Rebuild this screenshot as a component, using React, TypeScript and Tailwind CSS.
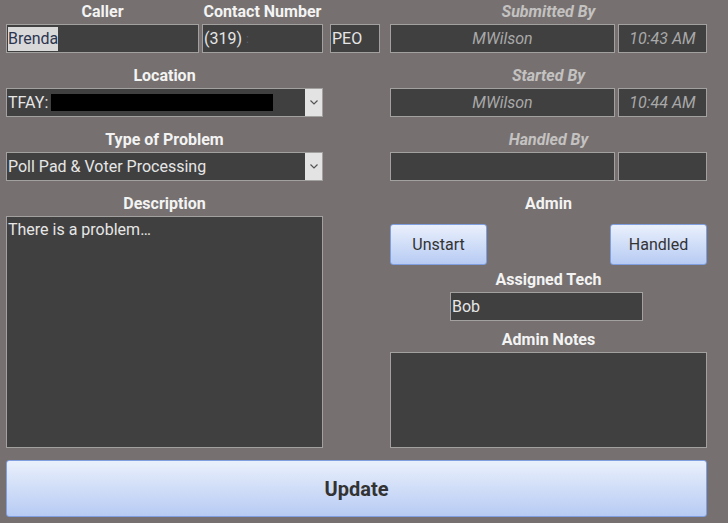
import React from 'react';

const Label: React.FC<{ text: string; muted?: boolean; className?: string }> = ({ text, muted, className }) => (
  <div
    className={`h-6 flex items-center justify-center text-base font-bold ${
      muted ? 'italic text-[#c4c2c1]' : 'text-[#f3f3f3]'
    } ${className ?? ''}`}
  >
    {text}
  </div>
);

const Box: React.FC<{ className?: string; muted?: boolean; children?: React.ReactNode }> = ({ className, muted, children }) => (
  <div
    className={`h-[29px] bg-[#404040] border border-[#a3a19f] flex items-center px-[1px] text-base overflow-hidden whitespace-nowrap ${
      muted ? 'italic justify-center text-[#a9a9a9]' : 'text-[#e6e6e6]'
    } ${className ?? ''}`}
  >
    {children}
  </div>
);

const Select: React.FC<{ children: React.ReactNode }> = ({ children }) => (
  <div className="h-[29px] w-[317px] bg-[#404040] border border-[#a3a19f] flex items-stretch text-base text-[#e6e6e6]">
    <div className="flex-1 flex items-center px-[1px] overflow-hidden whitespace-nowrap">{children}</div>
    <div className="w-[17px] bg-[#e3e3e3] flex items-center justify-center">
      <svg width="8" height="5" viewBox="0 0 8 5">
        <path d="M0.5 0.5 L4 4 L7.5 0.5" fill="none" stroke="#555" strokeWidth="1.2" />
      </svg>
    </div>
  </div>
);

const TimeRow: React.FC<{ name?: string; time?: string }> = ({ name, time }) => (
  <div className="flex gap-[3px]">
    <Box muted className="w-[225px]">{name}</Box>
    <Box muted className="w-[89px]">{time}</Box>
  </div>
);

const Btn: React.FC<{ text: string; className?: string }> = ({ text, className }) => (
  <button
    className={`rounded-[3px] border border-[#7f9fe0] bg-gradient-to-b from-[#eaf0fc] to-[#b7cbf3] text-[#333] ${className ?? ''}`}
  >
    {text}
  </button>
);

export default function App() {
  return (
    <div className="w-[728px] h-[523px] bg-[#767170] font-['Roboto',sans-serif] px-[6px] overflow-hidden">
      <div className="grid grid-cols-[384px_317px]">
        {/* left column */}
        <div className="flex flex-col">
          <div className="flex">
            <div className="flex flex-col w-[193px]">
              <Label text="Caller" />
              <Box className="w-[193px]">
                <span className="bg-[#d9d9d9] text-[#2b3550]">Brenda</span>
              </Box>
            </div>
            <div className="flex flex-col w-[121px] ml-[3px]">
              <Label text="Contact Number" className="whitespace-nowrap" />
              <Box className="w-[121px]">
                (319)<span className="text-[#55607a] ml-1 text-xs">:</span>
              </Box>
            </div>
            <div className="flex flex-col w-[50px] ml-[7px]">
              <div className="h-6" />
              <Box className="w-[50px]">PEO</Box>
            </div>
          </div>

          <Label text="Location" className="mt-[11px] w-[317px]" />
          <Select>
            TFAY:
            <span className="ml-[3px] inline-block w-[222px] h-[17px] bg-black" />
          </Select>

          <Label text="Type of Problem" className="mt-[11px] w-[317px]" />
          <Select>Poll Pad &amp; Voter Processing</Select>

          <Label text="Description" className="mt-[11px] w-[317px]" />
          <div className="w-[317px] h-[232px] bg-[#404040] border border-[#a3a19f] px-[1px] text-base leading-[26px] text-[#e6e6e6]">
            There is a problem…
          </div>
        </div>

        {/* right column */}
        <div className="flex flex-col">
          <Label text="Submitted By" muted />
          <TimeRow name="MWilson" time="10:43 AM" />

          <Label text="Started By" muted className="mt-[11px]" />
          <TimeRow name="MWilson" time="10:44 AM" />

          <Label text="Handled By" muted className="mt-[11px]" />
          <TimeRow />

          <Label text="Admin" className="mt-[11px]" />
          <div className="flex justify-between mt-[8px]">
            <Btn text="Unstart" className="w-[97px] h-[41px] text-base" />
            <Btn text="Handled" className="w-[97px] h-[41px] text-base" />
          </div>

          <Label text="Assigned Tech" className="mt-[3px]" />
          <Box className="w-[193px] ml-[60px]">Bob</Box>

          <Label text="Admin Notes" className="mt-[7px]" />
          <div className="h-[96px] bg-[#404040] border border-[#a3a19f]" />
        </div>
      </div>

      <Btn text="Update" className="mt-[12px] w-[701px] h-[57px] text-xl font-bold" />
    </div>
  );
}
